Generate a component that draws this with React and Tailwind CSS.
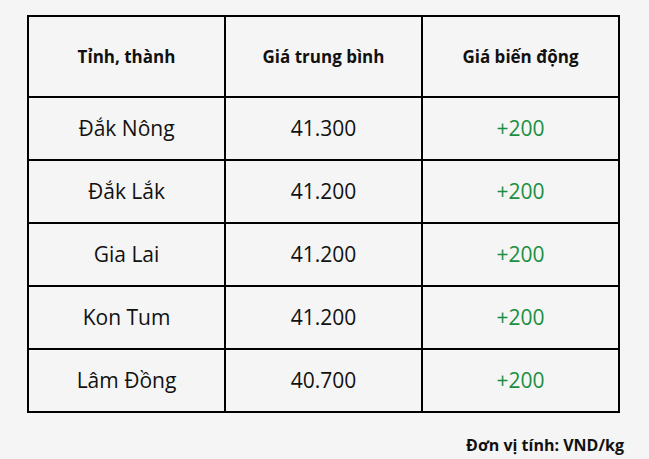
import React from 'react';

const rows = [
  { name: 'Đắk Nông', avg: '41.300', diff: '+200' },
  { name: 'Đắk Lắk', avg: '41.200', diff: '+200' },
  { name: 'Gia Lai', avg: '41.200', diff: '+200' },
  { name: 'Kon Tum', avg: '41.200', diff: '+200' },
  { name: 'Lâm Đồng', avg: '40.700', diff: '+200' },
];

const App = () => {
  return (
    <div className="w-[649px] h-[459px] bg-[#f5f5f5] text-[#111] font-['Open_Sans',sans-serif] overflow-hidden">
      <div className="pl-[27px] pt-[15px]">
        <table className="w-[593px] border-collapse border-2 border-black table-fixed">
          <thead>
            <tr className="h-[81px]">
              <th className="border-2 border-black text-[17px] font-bold">Tỉnh, thành</th>
              <th className="border-2 border-black text-[17px] font-bold">Giá trung bình</th>
              <th className="border-2 border-black text-[17px] font-bold">Giá biến động</th>
            </tr>
          </thead>
          <tbody>
            {rows.map((r) => (
              <tr key={r.name} className="h-[63px]">
                <td className="border-2 border-black text-center text-[21px]">{r.name}</td>
                <td className="border-2 border-black text-center text-[21px]">{r.avg}</td>
                <td className="border-2 border-black text-center text-[21px] text-[#1a8f3f]">{r.diff}</td>
              </tr>
            ))}
          </tbody>
        </table>
      </div>
      <div className="pr-[25px] pt-[20px] text-right text-[16px] font-bold leading-[24px]">Đơn vị tính: VND/kg</div>
    </div>
  );
};

export default App;
